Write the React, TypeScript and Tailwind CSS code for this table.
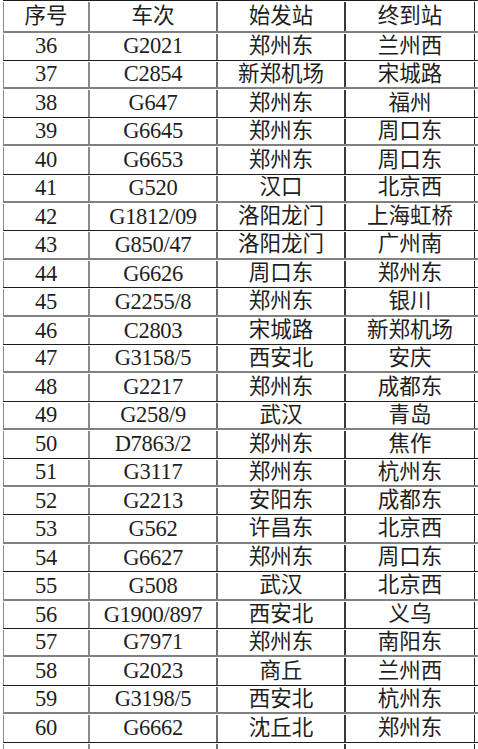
const rows: [string, string, string, string][] = [
  ["36", "G2021", "郑州东", "兰州西"],
  ["37", "C2854", "新郑机场", "宋城路"],
  ["38", "G647", "郑州东", "福州"],
  ["39", "G6645", "郑州东", "周口东"],
  ["40", "G6653", "郑州东", "周口东"],
  ["41", "G520", "汉口", "北京西"],
  ["42", "G1812/09", "洛阳龙门", "上海虹桥"],
  ["43", "G850/47", "洛阳龙门", "广州南"],
  ["44", "G6626", "周口东", "郑州东"],
  ["45", "G2255/8", "郑州东", "银川"],
  ["46", "C2803", "宋城路", "新郑机场"],
  ["47", "G3158/5", "西安北", "安庆"],
  ["48", "G2217", "郑州东", "成都东"],
  ["49", "G258/9", "武汉", "青岛"],
  ["50", "D7863/2", "郑州东", "焦作"],
  ["51", "G3117", "郑州东", "杭州东"],
  ["52", "G2213", "安阳东", "成都东"],
  ["53", "G562", "许昌东", "北京西"],
  ["54", "G6627", "郑州东", "周口东"],
  ["55", "G508", "武汉", "北京西"],
  ["56", "G1900/897", "西安北", "义乌"],
  ["57", "G7971", "郑州东", "南阳东"],
  ["58", "G2023", "商丘", "兰州西"],
  ["59", "G3198/5", "西安北", "杭州东"],
  ["60", "G6662", "沈丘北", "郑州东"],
  ["", "", "", ""],
];

// latin parts a bit larger so the digits read like the reference
const Latin = ({ text }: { text: string }) => (
  <span className="text-[22.5px] tracking-[-0.3px]">{text}</span>
);

const Row = ({ cells, dark }: { cells: string[]; dark: boolean }) => (
  <div
    className={
      "flex h-[28.42px] pt-[1px] " +
      (dark ? "border-b border-[#1f1f1f]" : "border-b-2 border-[#808080]")
    }
  >
    <div className="w-[87px] flex items-center justify-center border-l border-r-2 border-l-[#8a8a8a] border-r-[#8a8a8a]">
      <Latin text={cells[0]} />
    </div>
    <div className="w-[128px] flex items-center justify-center border-r-2 border-r-[#6e6e6e]">
      <Latin text={cells[1]} />
    </div>
    <div className="w-[128px] flex items-center justify-center border-r-2 border-r-[#3a3a3a]">
      {cells[2]}
    </div>
    <div className="w-[129px] flex items-center justify-center border-r border-r-[#222]">
      {cells[3]}
    </div>
  </div>
);

export default function App() {
  return (
    <div className="w-[478px] h-[749px] overflow-hidden bg-white pl-[3px] text-[21.5px] leading-none text-[#1e1e1e] font-['Liberation_Serif','Noto_Sans_CJK_SC',serif]">
      <div className="flex h-[32.5px] pt-[1px] border-t border-[#1f1f1f] border-b-2 border-b-[#808080]">
        <div className="w-[87px] flex items-center justify-center border-l border-r-2 border-l-[#8a8a8a] border-r-[#8a8a8a]">
          序号
        </div>
        <div className="w-[128px] flex items-center justify-center border-r-2 border-r-[#6e6e6e]">
          车次
        </div>
        <div className="w-[128px] flex items-center justify-center border-r-2 border-r-[#3a3a3a]">
          始发站
        </div>
        <div className="w-[129px] flex items-center justify-center border-r border-r-[#222]">
          终到站
        </div>
      </div>
      {rows.map((r, i) => (
        <Row key={i} cells={r} dark={i % 2 === 0} />
      ))}
    </div>
  );
}
